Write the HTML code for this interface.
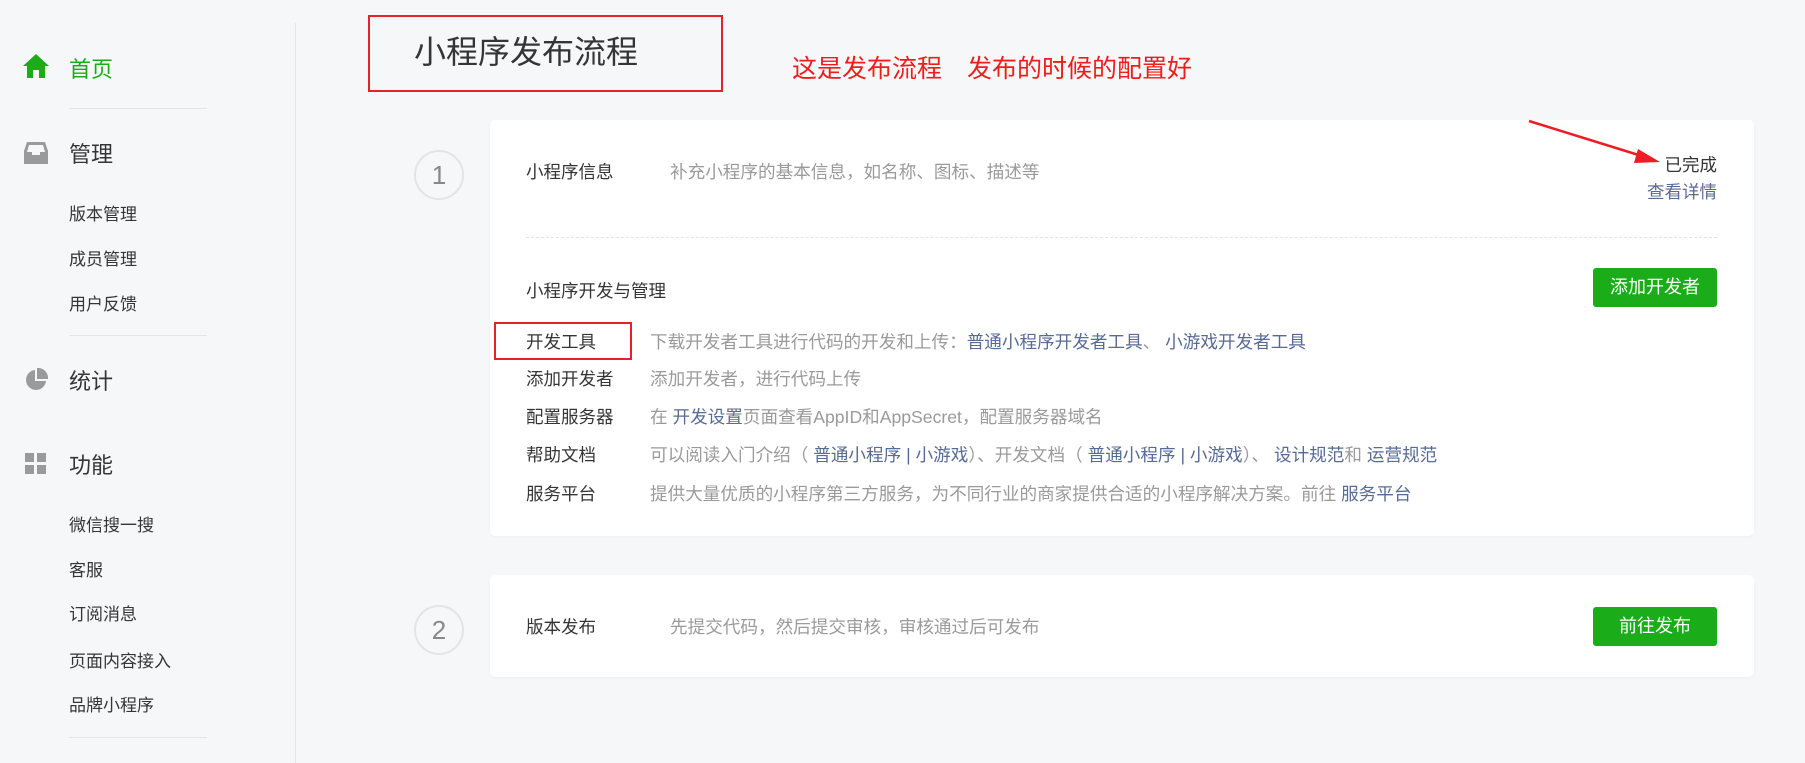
<!DOCTYPE html>
<html><head><meta charset="utf-8"><style>
body{margin:0;width:1805px;height:755px;background:#f6f7f9;font-family:"Liberation Sans","Noto Sans CJK SC",sans-serif;position:relative;overflow:hidden;color:#353535}
.a{position:absolute;white-space:nowrap}
.side{font-size:17px;color:#353535}
.big{font-size:22px;color:#353535}
.sep{position:absolute;left:69px;width:138px;height:1px;background:#e5e5e5}
.card{position:absolute;left:490px;width:1264px;background:#fff;border-radius:5px;box-shadow:0 1px 2px rgba(0,0,0,.04)}
.circ{position:absolute;width:46px;height:46px;border:2px solid #e4e4e4;border-radius:50%;text-align:center;line-height:46px;font-size:26px;color:#888}
.lbl{font-size:17.5px;color:#353535}
.ds{font-size:17.6px;color:#9a9a9a}
.lk{color:#576b95}
.btn{position:absolute;left:1593px;width:124px;height:39px;background:#1aad19;color:#fff;border-radius:3px;font-size:18px;text-align:center;line-height:39px}
</style></head><body>
<div class="a" style="left:295px;top:23px;width:1px;height:740px;background:#e7e7e7"></div>
<svg class="a" style="left:23px;top:54px" width="26" height="24" viewBox="0 0 26 24"><path d="M13 0 L26 12 L22 12 L22 24 L16 24 L16 16 L10 16 L10 24 L4 24 L4 12 L0 12Z" fill="#1aad19"/></svg>
<div class="a" style="left:69px;top:52px;font-size:22px;color:#1aad19">首页</div>
<div class="sep" style="top:108px"></div>
<svg class="a" style="left:24px;top:141px" width="24" height="24" viewBox="0 0 24 24"><path d="M3 1h18l3 9v13H0V10z" fill="#9a9a9a"/><path d="M5 4h14l2 7h-5v3H8v-3H3z" fill="#f6f7f9"/></svg>
<div class="a big" style="left:69px;top:137px">管理</div>
<div class="a side" style="left:69px;top:200px">版本管理</div>
<div class="a side" style="left:69px;top:245px">成员管理</div>
<div class="a side" style="left:69px;top:290px">用户反馈</div>
<div class="sep" style="top:335px"></div>
<svg class="a" style="left:24px;top:368px" width="24" height="24" viewBox="0 0 24 24"><path d="M11 2A10 10 0 1 0 22 13H11z" fill="#9a9a9a"/><path d="M13 0A10 10 0 0 1 24 11H13z" fill="#9a9a9a"/></svg>
<div class="a big" style="left:69px;top:364px">统计</div>
<svg class="a" style="left:25px;top:453px" width="22" height="22"><rect x="0" y="0" width="9" height="9" fill="#9a9a9a"/><rect x="12" y="0" width="9" height="9" fill="#9a9a9a"/><rect x="0" y="12" width="9" height="9" fill="#9a9a9a"/><rect x="12" y="12" width="9" height="9" fill="#9a9a9a"/></svg>
<div class="a big" style="left:69px;top:448px">功能</div>
<div class="a side" style="left:69px;top:511px">微信搜一搜</div>
<div class="a side" style="left:69px;top:556px">客服</div>
<div class="a side" style="left:69px;top:600px">订阅消息</div>
<div class="a side" style="left:69px;top:647px">页面内容接入</div>
<div class="a side" style="left:69px;top:691px">品牌小程序</div>
<div class="sep" style="top:737px"></div>

<div class="a" style="left:368px;top:15px;width:351px;height:73px;border:2px solid #e8202a"></div>
<div class="a" style="left:414px;top:27px;font-size:32px;color:#353535">小程序发布流程</div>
<div class="a" style="left:792px;top:49px;font-size:25px;color:#f01c1c">这是发布流程　发布的时候的配置好</div>

<div class="card" style="top:120px;height:416px"></div>
<div class="circ" style="left:414px;top:150px">1</div>
<div class="a lbl" style="left:526px;top:159px">小程序信息</div>
<div class="a ds" style="left:670px;top:159px">补充小程序的基本信息，如名称、图标、描述等</div>
<div class="a lbl" style="left:1717px;top:152px;transform:translateX(-100%)">已完成</div>
<div class="a lbl lk" style="left:1717px;top:179px;transform:translateX(-100%)">查看详情</div>
<div class="a" style="left:526px;top:237px;width:1191px;border-top:1px dashed #e5e5e5"></div>
<div class="a lbl" style="left:526px;top:278px">小程序开发与管理</div>
<div class="btn" style="top:268px">添加开发者</div>
<div class="a lbl" style="left:526px;top:329px">开发工具</div>
<div class="a ds" style="left:650px;top:329px">下载开发者工具进行代码的开发和上传：<span class="lk">普通小程序开发者工具</span>、 <span class="lk">小游戏开发者工具</span></div>
<div class="a lbl" style="left:526px;top:366px">添加开发者</div>
<div class="a ds" style="left:650px;top:366px">添加开发者，进行代码上传</div>
<div class="a lbl" style="left:526px;top:404px">配置服务器</div>
<div class="a ds" style="left:650px;top:404px">在 <span class="lk">开发设置</span>页面查看AppID和AppSecret，配置服务器域名</div>
<div class="a lbl" style="left:526px;top:442px">帮助文档</div>
<div class="a ds" style="left:650px;top:442px">可以阅读入门介绍（ <span class="lk">普通小程序 | 小游戏</span>）、开发文档（ <span class="lk">普通小程序 | 小游戏</span>）、 <span class="lk">设计规范</span>和 <span class="lk">运营规范</span></div>
<div class="a lbl" style="left:526px;top:481px">服务平台</div>
<div class="a ds" style="left:650px;top:481px">提供大量优质的小程序第三方服务，为不同行业的商家提供合适的小程序解决方案。前往 <span class="lk">服务平台</span></div>
<div class="a" style="left:494px;top:322px;width:134px;height:34px;border:2px solid #e8202a"></div>
<svg class="a" style="left:0;top:0" width="1805" height="755"><line x1="1529" y1="121" x2="1645" y2="157" stroke="#ee1c24" stroke-width="2.5"/><path d="M1660 162 L1638 149 L1634 163Z" fill="#ee1c24"/></svg>

<div class="card" style="top:575px;height:102px"></div>
<div class="circ" style="left:414px;top:605px">2</div>
<div class="a lbl" style="left:526px;top:614px">版本发布</div>
<div class="a ds" style="left:670px;top:614px">先提交代码，然后提交审核，审核通过后可发布</div>
<div class="btn" style="top:607px">前往发布</div>
</body></html>
